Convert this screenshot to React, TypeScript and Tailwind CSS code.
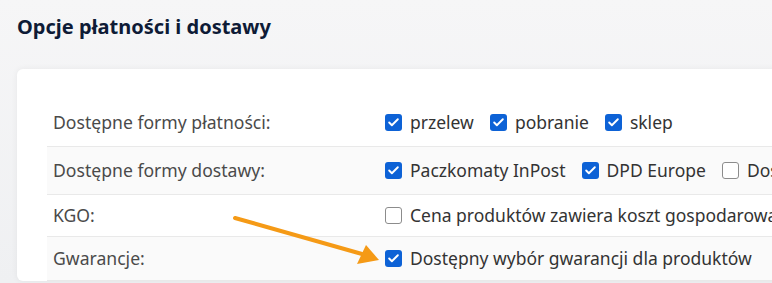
import { Check } from 'lucide-react';

type Opt = { label: string; checked: boolean };

const rows: { label: string; options: Opt[]; h: string; shade: boolean }[] = [
  {
    label: 'Dostępne formy płatności:',
    options: [
      { label: 'przelew', checked: true },
      { label: 'pobranie', checked: true },
      { label: 'sklep', checked: true },
    ],
    h: 'h-[48px]',
    shade: false,
  },
  {
    label: 'Dostępne formy dostawy:',
    options: [
      { label: 'Paczkomaty InPost', checked: true },
      { label: 'DPD Europe', checked: true },
      { label: 'Dostawa kurierem', checked: false },
    ],
    h: 'h-[48px]',
    shade: true,
  },
  {
    label: 'KGO:',
    options: [{ label: 'Cena produktów zawiera koszt gospodarowania odpadami', checked: false }],
    h: 'h-[42px]',
    shade: false,
  },
  {
    label: 'Gwarancje:',
    options: [{ label: 'Dostępny wybór gwarancji dla produktów', checked: true }],
    h: 'h-[44px]',
    shade: true,
  },
];

function Checkbox({ checked }: { checked: boolean }) {
  return checked ? (
    <span className="flex h-[17px] w-[17px] shrink-0 items-center justify-center rounded-[3px] bg-[#0d62d6]">
      <Check size={13} strokeWidth={3.5} className="text-white" />
    </span>
  ) : (
    <span className="h-[17px] w-[17px] shrink-0 rounded-[3px] border-[1.5px] border-[#8c8c8c] bg-white" />
  );
}

export default function App() {
  return (
    <div className="relative h-[283px] w-[772px] overflow-hidden bg-gradient-to-b from-[#f6f6f7] to-[#eff0f2] font-['Noto_Sans',sans-serif]">
      <h1 className="pl-[17px] pt-[13px] text-[20px] font-bold leading-[28px] text-[#0e1b36]">
        Opcje płatności i dostawy
      </h1>

      <div className="ml-[17px] mt-[28px] w-[800px] rounded-md bg-white pl-[30px] pt-[30px] shadow-[0_0_6px_rgba(0,0,0,0.06)]">
        {rows.map((row) => (
          <div
            key={row.label}
            className={`flex items-center border-b border-[#e9e9e9] ${row.h} ${row.shade ? 'bg-[#fafafa]' : ''}`}
          >
            <div className="w-[338px] shrink-0 pl-[6px] text-[17.6px] text-[#4a4a4a]">{row.label}</div>
            <div className="flex items-center gap-4 whitespace-nowrap">
              {row.options.map((o) => (
                <label key={o.label} className="flex items-center gap-[8px] text-[17.5px] text-[#333]">
                  <Checkbox checked={o.checked} />
                  <span>{o.label}</span>
                </label>
              ))}
            </div>
          </div>
        ))}
      </div>

      {/* arrow pointing at the warranty checkbox */}
      <svg className="pointer-events-none absolute left-0 top-0" width="772" height="283">
        <line x1="235" y1="218" x2="362" y2="254" stroke="#f59a16" strokeWidth="4" strokeLinecap="round" />
        <polygon points="379,260 357,264 366,245" fill="#f59a16" />
      </svg>
    </div>
  );
}
